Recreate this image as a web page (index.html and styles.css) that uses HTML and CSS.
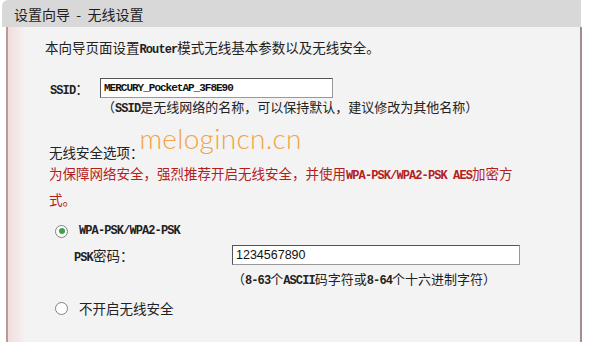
FILE: index.html
```html
<!DOCTYPE html>
<html lang="zh-CN">
<head>
    <meta charset="UTF-8">
    <title>设置向导 - 无线设置</title>
    <link rel="stylesheet" href="styles.css">
</head>
<body>
    <div class="title">设置向导 &nbsp;-&nbsp; 无线设置</div>
    <div class="panel">
        <p class="intro">本向导页面设置<span class="en">Router</span>模式无线基本参数以及无线安全。</p>

        <div class="row ssid-row">
            <label class="ssid-label" for="ssid"><span class="en">SSID</span>：</label>
            <input type="text" id="ssid" class="ssid-input" value="MERCURY_PocketAP_3F8E90">
        </div>
        <p class="hint ssid-hint">（<span class="en">SSID</span>是无线网络的名称，可以保持默认，建议修改为其他名称）</p>

        <p class="sec-title">无线安全选项：<span class="mark">melogincn.cn</span></p>
        <p class="warn">为保障网络安全，强烈推荐开启无线安全，并使用<span class="en">WPA-PSK/WPA2-PSK AES</span>加密方<br>式。</p>

        <div class="row radio-row">
            <span class="radio checked"></span>
            <span class="en">WPA-PSK/WPA2-PSK</span>
        </div>
        <div class="row psk-row">
            <label class="psk-label" for="psk"><span class="en">PSK</span>密码：</label>
            <input type="text" id="psk" class="psk-input" value="1234567890">
        </div>
        <p class="hint psk-hint">（<span class="en">8-63</span>个<span class="en">ASCII</span>码字符或<span class="en">8-64</span>个十六进制字符）</p>

        <div class="row radio-row off-row">
            <span class="radio"></span>
            <span>不开启无线安全</span>
        </div>
    </div>
</body>
</html>
```

FILE: styles.css
```css
body {
    margin: 0;
    background: #fff;
    font-family: "Noto Sans CJK SC", sans-serif;
    font-size: 13.5px;
    color: #222;
    width: 589px;
    height: 342px;
    overflow: hidden;
}
p {
    margin: 0;
}
.en {
    font-family: "Liberation Mono", monospace;
    font-size: 12px;
    font-weight: bold;
    letter-spacing: -0.9px;
}
.title {
    margin-left: 2px;
    width: 579px;
    height: 27px;
    line-height: 28px;
    padding-left: 12px;
    box-sizing: border-box;
    background: #d8d8d8;
    border-top-left-radius: 6px;
    font-size: 14px;
    color: #1e1e1e;
}
.panel {
    margin-left: 6px;
    width: 576px;
    height: 320px;
    box-sizing: border-box;
    border-left: 2px solid #b89a98;
    border-right: 2px solid #a68c8c;
    background: linear-gradient(to right, #f1dedb, #f4f3f3 18px);
    padding: 10px 0 0 37px;
}
.intro {
    line-height: 20px;
}
.row {
    display: flex;
    align-items: center;
}
.ssid-row {
    margin-top: 18px;
    height: 20px;
}
.ssid-label {
    margin-left: 5px;
    width: 50px;
}
input {
    height: 20px;
    box-sizing: border-box;
    border: 1px solid #555;
    border-right-color: #999;
    border-bottom-color: #999;
    background: #fff;
    padding: 0 3px;
    margin: 0;
    color: #111;
}
.ssid-input {
    width: 233px;
    font-family: "Liberation Mono", monospace;
    font-size: 11px;
    font-weight: bold;
    letter-spacing: -1px;
}
.hint {
    font-size: 13px;
}
.ssid-hint {
    margin-left: 57px;
    line-height: 18px;
}
.sec-title {
    margin-top: 24px;
    margin-left: 4px;
    line-height: 20px;
}
.mark {
    position: relative;
    top: -9px;
    margin-left: -4px;
    line-height: 0;
    font-family: Lato, sans-serif;
    font-weight: 300;
    font-size: 28px;
    letter-spacing: 0.3px;
    color: #f0a347;
}
.warn {
    margin-left: 4px;
    line-height: 23px;
    color: #b3201c;
}
.radio-row {
    margin-top: 10px;
    height: 20px;
    padding-left: 10px;
}
.radio {
    width: 11px;
    height: 11px;
    border: 1px solid #808080;
    border-radius: 50%;
    background: #fff;
    margin-right: 11px;
    position: relative;
}
.radio.checked::after {
    content: "";
    position: absolute;
    left: 2.5px;
    top: 2.5px;
    width: 6px;
    height: 6px;
    border-radius: 50%;
    background: #3da24a;
}
.psk-row {
    margin-top: 4px;
    height: 20px;
}
.psk-label {
    margin-left: 29px;
    width: 158px;
}
.psk-input {
    width: 288px;
    font-family: "Liberation Sans", sans-serif;
    font-size: 12.5px;
}
.psk-hint {
    margin-left: 187px;
    margin-top: 4px;
    line-height: 20px;
}
.off-row {
    margin-top: 7px;
}
```
